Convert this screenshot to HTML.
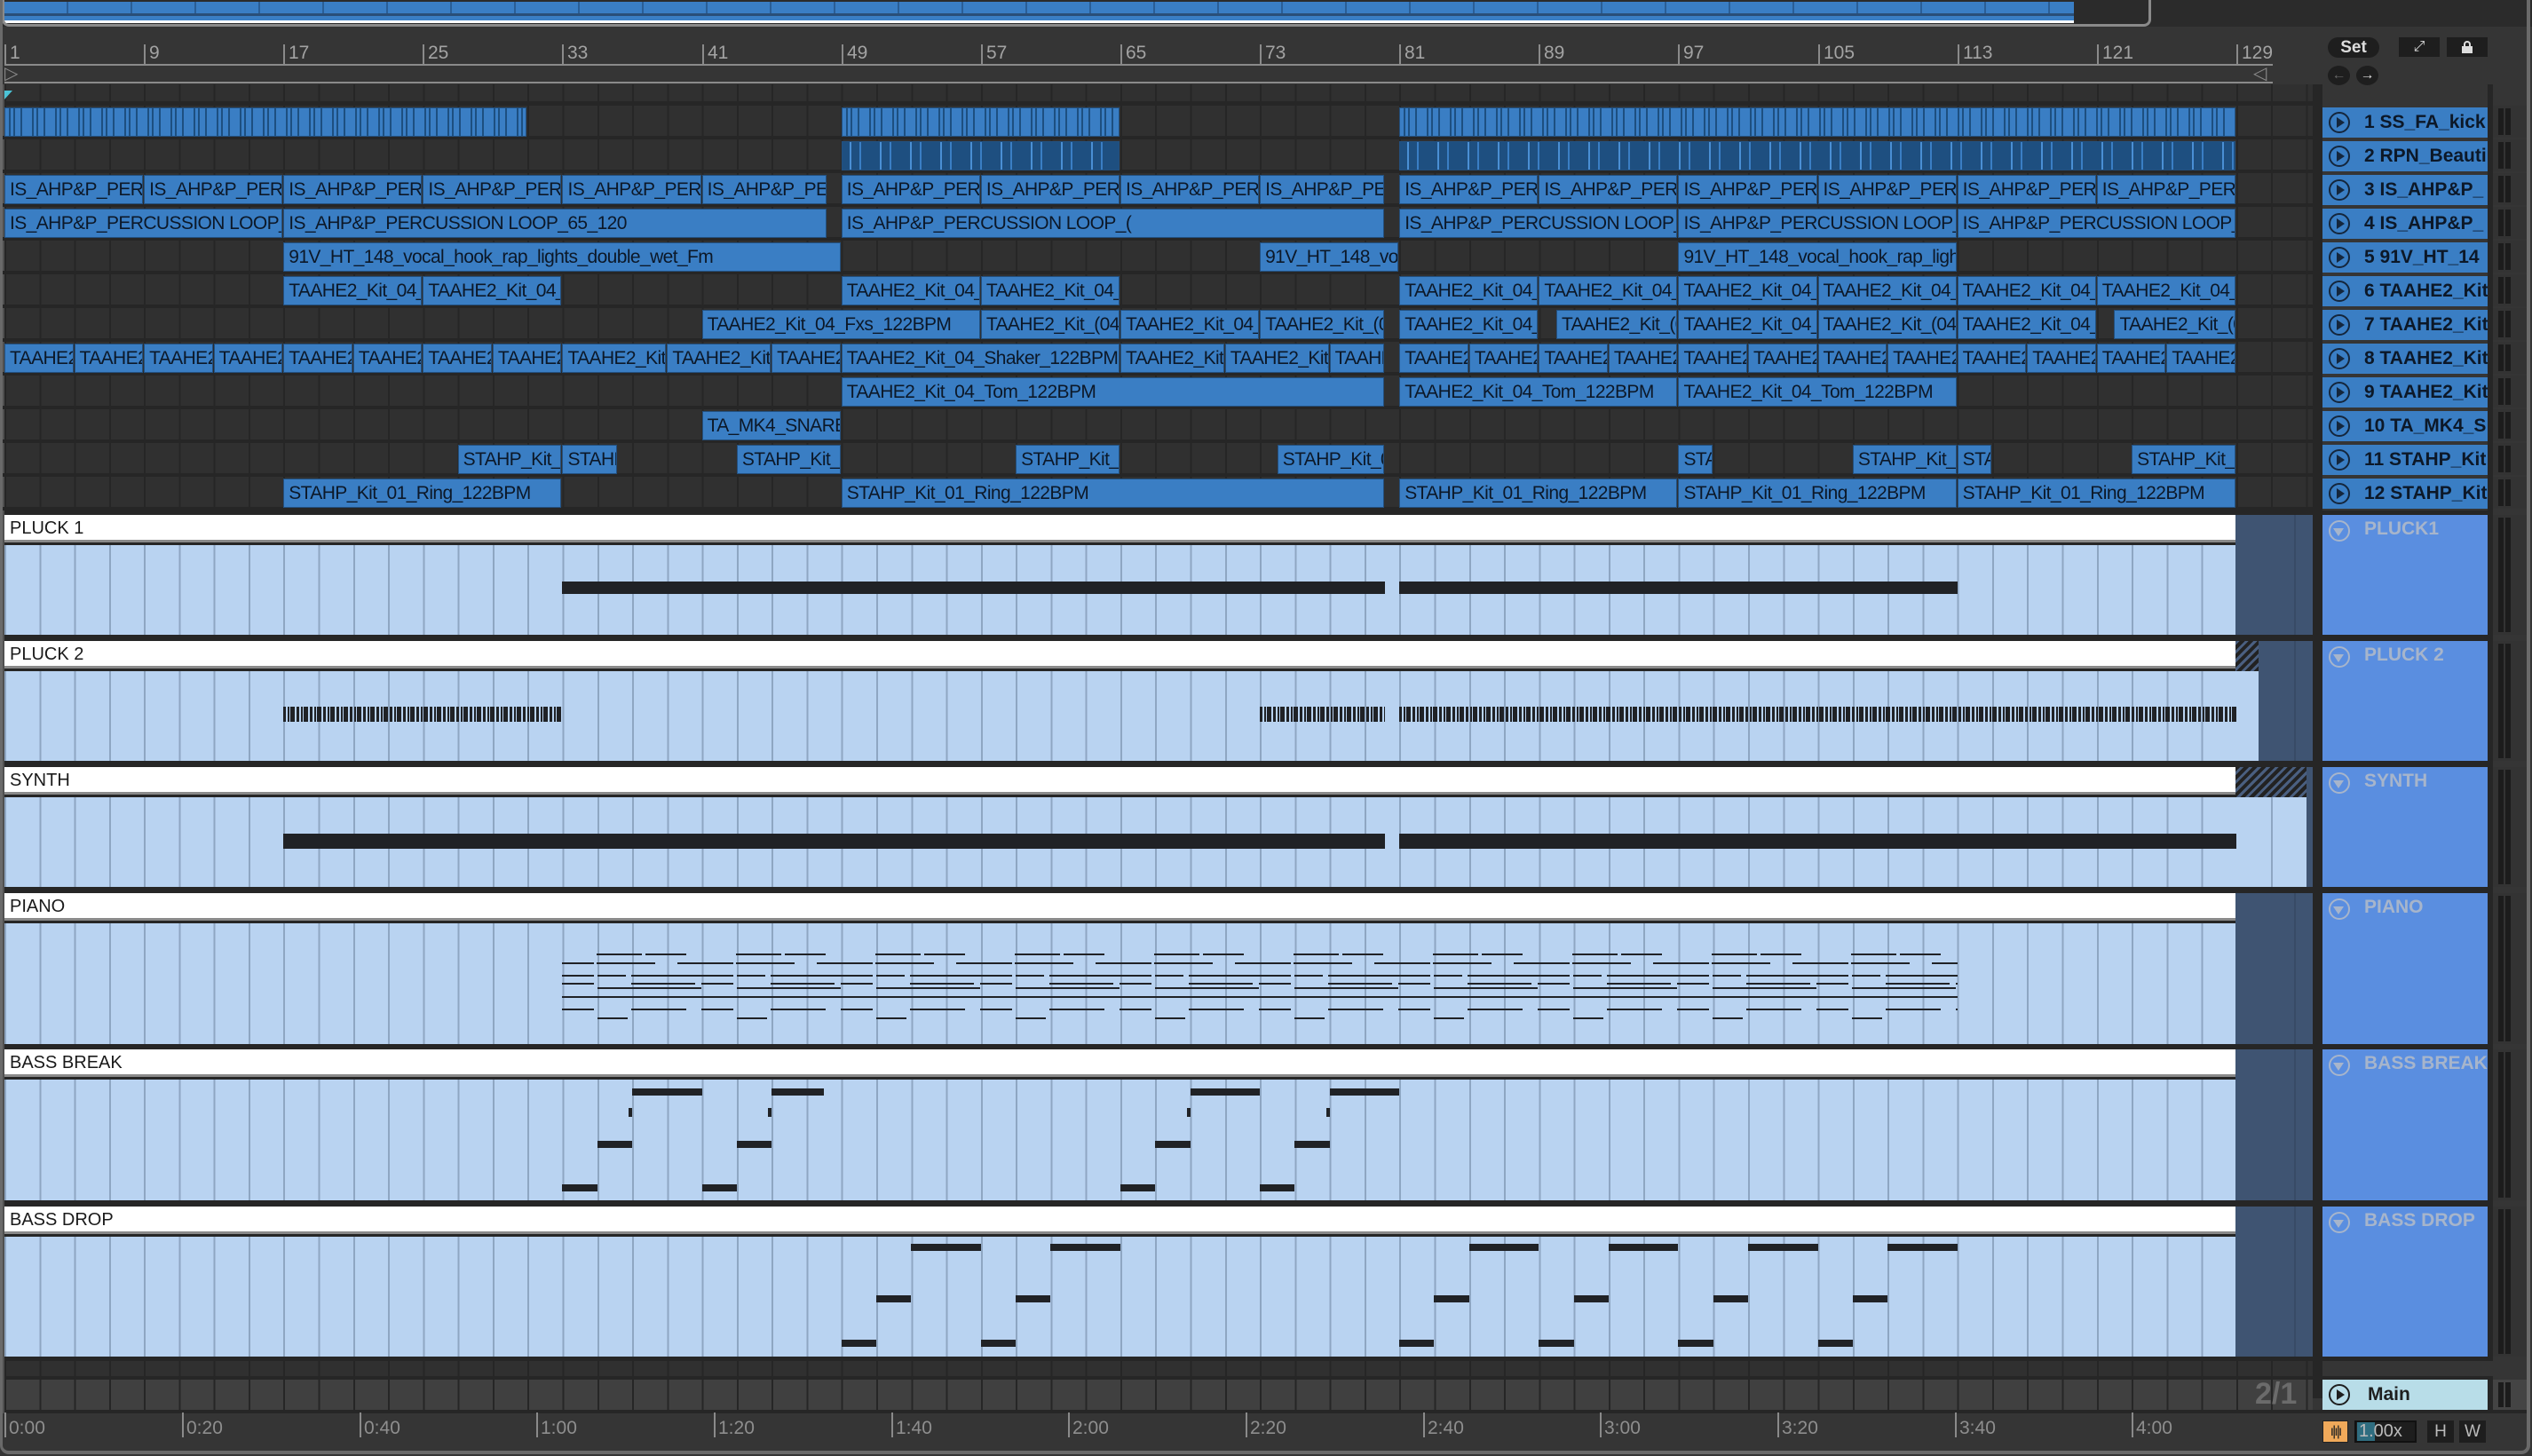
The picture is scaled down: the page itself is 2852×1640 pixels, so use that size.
<!DOCTYPE html>
<html><head><meta charset="utf-8">
<style>
*{margin:0;padding:0;box-sizing:border-box}
body{width:2852px;height:1640px;background:#353535;position:relative;overflow:hidden;font-family:"Liberation Sans Narrow","Liberation Sans",sans-serif}
.a{position:absolute}
.grid{position:absolute;left:5px;width:2600px;background-color:#303030;background-image:repeating-linear-gradient(90deg,#262626 0 2px,transparent 2px 39.28px)}
.row{position:absolute;left:0;width:2605px;height:38px;border-bottom:4px solid #262626}
.c{position:absolute;top:2px;height:33px;left:calc(5px + (var(--b) - 1) * 19.64px);width:calc((var(--e) - var(--b)) * 19.64px - 1px);background:#3a7ec4;border:1px solid #23507f;color:#0c1828;font-size:21px;line-height:31px;padding-left:5px;white-space:nowrap;overflow:hidden;letter-spacing:-0.6px}
.kick{background:repeating-linear-gradient(90deg,#3a7ec4 0 4px,#1d4f80 4px 6px,#3a7ec4 6px 9px,#1d4f80 9px 11px,#3a7ec4 11px 17px,#1d4f80 17px 19px,#3a7ec4 19px 26px)}
.rpn{background:repeating-linear-gradient(90deg,#1e4f80 0 8px,#4a8fd4 8px 10px,#1e4f80 10px 19px,#3a7ec4 19px 21px,#1e4f80 21px 34px)}
.mh{position:absolute;left:5px;width:2513px;height:31px;background:#fff;border-bottom:3px solid #8a8a8a;font-size:20px;line-height:31px;padding-left:6px;color:#1a1a1a;font-family:"Liberation Sans",sans-serif}
.mb{position:absolute;left:5px;width:2513px;background-color:#b9d3f1;background-image:repeating-linear-gradient(90deg,#8ea6c2 0 2px,transparent 2px 39.28px)}
.mx{position:absolute;left:2518px;width:87px;background:#3f5472;background-image:linear-gradient(90deg,transparent 0 66px,#384b66 66px 68px,transparent 68px)}
.n{position:absolute;height:8px;background:#202226;left:calc(5px + (var(--b) - 1) * 19.64px);width:calc((var(--e) - var(--b)) * 19.64px)}
.bc{background:repeating-linear-gradient(90deg,#202226 0 3px,transparent 3px 5px,#202226 5px 7px,transparent 7px 8px,#202226 8px 13px,transparent 13px 15px)}
.pl{position:absolute;height:2px;left:633px;width:1572px}
.th{position:absolute;left:2616px;width:186px;height:34px;background:#3a7ec4;color:#0c1828;font-family:"Liberation Sans",sans-serif;font-weight:bold;font-size:21px;line-height:34px;padding-left:47px;white-space:nowrap;overflow:hidden}
.th:before{content:"";position:absolute;left:7px;top:5px;width:20px;height:20px;border:2.5px solid #14263c;border-radius:50%}
.th:after{content:"";position:absolute;left:16px;top:11px;border-left:9px solid #14263c;border-top:6px solid transparent;border-bottom:6px solid transparent}
.mth{position:absolute;left:2616px;width:186px;background:#5a8ee0;color:#a7b5cb;font-family:"Liberation Sans",sans-serif;font-weight:bold;font-size:21px;padding-left:47px;padding-top:4px;white-space:nowrap;overflow:hidden}
.mth:before{content:"";position:absolute;left:7px;top:6px;width:20px;height:20px;border:2.5px solid #a7b5cb;border-radius:50%}
.mth:after{content:"";position:absolute;left:12px;top:15px;border-top:9px solid #a7b5cb;border-left:6px solid transparent;border-right:6px solid transparent}
.met{position:absolute;left:2808px;width:40px;background:#333}
.met:before,.met:after{content:"";position:absolute;top:3px;bottom:3px;width:6px;background:#1c1c1c}
.met:before{left:6px}.met:after{left:14px}
.rl{position:absolute;top:50px;font-size:21px;color:#a3a3a3;border-left:2px solid #8a8a8a;padding-left:4px;height:22px;line-height:20px}
.tl{position:absolute;top:1591px;font-size:21px;color:#8e8e8e;border-left:2px solid #8a8a8a;padding-left:3px;height:28px;line-height:36px}
</style></head><body>

<div class="a" style="left:0;top:0;width:2852px;height:30px;background:#2b2b2b"></div>
<div class="a" style="left:5px;top:2px;width:2331px;height:14px;background:repeating-linear-gradient(90deg,#3a7ec4 0 70px,#2a5e96 70px 72px)"></div>
<div class="a" style="left:5px;top:15px;width:2331px;height:8px;background:linear-gradient(#2a4f78 0 3px,#3a7ec4 3px)"></div>
<div class="a" style="left:5px;top:23px;width:2331px;height:3px;background:#fff"></div>
<div class="a" style="left:2px;top:0;width:2421px;height:30px;border:3px solid #8a8a8a;border-top:none;border-radius:0 0 8px 8px"></div>

<div class="a" style="left:5px;top:72px;width:2555px;height:2px;background:#8a8a8a"></div>
<div class="a" style="left:5px;top:92px;width:2555px;height:2px;background:#8a8a8a"></div>
<div class="a" style="left:5px;top:74px;color:#8a8a8a;font-size:20px;line-height:18px">▷</div>
<div class="a" style="left:2538px;top:74px;color:#8a8a8a;font-size:20px;line-height:18px">◁</div>
<div class="rl" style="left:5px">1</div>
<div class="rl" style="left:162px">9</div>
<div class="rl" style="left:319px">17</div>
<div class="rl" style="left:476px">25</div>
<div class="rl" style="left:633px">33</div>
<div class="rl" style="left:791px">41</div>
<div class="rl" style="left:948px">49</div>
<div class="rl" style="left:1105px">57</div>
<div class="rl" style="left:1262px">65</div>
<div class="rl" style="left:1419px">73</div>
<div class="rl" style="left:1576px">81</div>
<div class="rl" style="left:1733px">89</div>
<div class="rl" style="left:1890px">97</div>
<div class="rl" style="left:2048px">105</div>
<div class="rl" style="left:2205px">113</div>
<div class="rl" style="left:2362px">121</div>
<div class="rl" style="left:2519px">129</div>

<div class="a" style="left:2622px;top:42px;width:58px;height:23px;background:#1e1e1e;border-radius:12px;color:#ddd;font-family:'Liberation Sans',sans-serif;font-size:19px;font-weight:bold;text-align:center;line-height:23px">Set</div>
<div class="a" style="left:2702px;top:42px;width:46px;height:22px;background:#1e1e1e;color:#ddd;text-align:center;font-size:16px;line-height:22px">⤢</div>
<div class="a" style="left:2756px;top:42px;width:46px;height:22px;background:#1e1e1e"></div>
<div class="a" style="left:2773px;top:52px;width:12px;height:8px;background:#ddd"></div>
<div class="a" style="left:2775px;top:46px;width:8px;height:8px;border:2px solid #ddd;border-bottom:none;border-radius:4px 4px 0 0"></div>
<div class="a" style="left:2622px;top:74px;width:25px;height:22px;background:#1e1e1e;border-radius:50%;color:#666;text-align:center;font-size:16px;line-height:22px">←</div>
<div class="a" style="left:2654px;top:74px;width:25px;height:22px;background:#1e1e1e;border-radius:50%;color:#ddd;text-align:center;font-size:16px;line-height:22px">→</div>

<div class="grid" style="top:95px;height:482px"></div>
<div class="a" style="left:5px;top:114px;width:2600px;height:5px;background:#262626"></div>
<div class="a" style="left:2605px;top:95px;width:11px;height:1440px;background:#262626"></div>
<div class="a" style="left:0;top:95px;width:5px;height:1500px;background:#505050"></div>

<div class="row" style="top:119px">
<div class="c kick" style="--b:1;--e:31"></div><div class="c kick" style="--b:49;--e:65"></div><div class="c kick" style="--b:81;--e:129"></div>
</div>
<div class="row" style="top:157px">
<div class="c rpn" style="--b:49;--e:65"></div><div class="c rpn" style="--b:81;--e:129"></div>
</div>
<div class="row" style="top:195px">
<div class="c" style="--b:1;--e:9">IS_AHP&amp;P_PERCUSSION</div><div class="c" style="--b:9;--e:17">IS_AHP&amp;P_PERCUSSION</div><div class="c" style="--b:17;--e:25">IS_AHP&amp;P_PERCUSSION</div><div class="c" style="--b:25;--e:33">IS_AHP&amp;P_PERCUSSION</div><div class="c" style="--b:33;--e:41">IS_AHP&amp;P_PERCUSSION</div><div class="c" style="--b:41;--e:48.2">IS_AHP&amp;P_PERCUSSION</div>
<div class="c" style="--b:49;--e:57">IS_AHP&amp;P_PERCUSSION</div><div class="c" style="--b:57;--e:65">IS_AHP&amp;P_PERCUSSION</div><div class="c" style="--b:65;--e:73">IS_AHP&amp;P_PERCUSSION</div><div class="c" style="--b:73;--e:80.2">IS_AHP&amp;P_PERCUSSION</div>
<div class="c" style="--b:81;--e:89">IS_AHP&amp;P_PERCUSSION</div><div class="c" style="--b:89;--e:97">IS_AHP&amp;P_PERCUSSION</div><div class="c" style="--b:97;--e:105">IS_AHP&amp;P_PERCUSSION</div><div class="c" style="--b:105;--e:113">IS_AHP&amp;P_PERCUSSION</div><div class="c" style="--b:113;--e:121">IS_AHP&amp;P_PERCUSSION</div><div class="c" style="--b:121;--e:129">IS_AHP&amp;P_PERCUSSION</div>
</div>
<div class="row" style="top:233px">
<div class="c" style="--b:1;--e:17">IS_AHP&amp;P_PERCUSSION LOOP_65_120</div><div class="c" style="--b:17;--e:48.2">IS_AHP&amp;P_PERCUSSION LOOP_65_120</div>
<div class="c" style="--b:49;--e:80.2">IS_AHP&amp;P_PERCUSSION LOOP_(</div>
<div class="c" style="--b:81;--e:97">IS_AHP&amp;P_PERCUSSION LOOP_65_120</div><div class="c" style="--b:97;--e:113">IS_AHP&amp;P_PERCUSSION LOOP_65_120</div><div class="c" style="--b:113;--e:129">IS_AHP&amp;P_PERCUSSION LOOP_65_120</div>
</div>
<div class="row" style="top:271px">
<div class="c" style="--b:17;--e:49">91V_HT_148_vocal_hook_rap_lights_double_wet_Fm</div><div class="c" style="--b:73;--e:81">91V_HT_148_vocal</div><div class="c" style="--b:97;--e:113">91V_HT_148_vocal_hook_rap_lights</div>
</div>
<div class="row" style="top:309px">
<div class="c" style="--b:17;--e:25">TAAHE2_Kit_04_</div><div class="c" style="--b:25;--e:33">TAAHE2_Kit_04_</div><div class="c" style="--b:49;--e:57">TAAHE2_Kit_04_</div><div class="c" style="--b:57;--e:65">TAAHE2_Kit_04_</div>
<div class="c" style="--b:81;--e:89">TAAHE2_Kit_04_</div><div class="c" style="--b:89;--e:97">TAAHE2_Kit_04_</div><div class="c" style="--b:97;--e:105">TAAHE2_Kit_04_</div><div class="c" style="--b:105;--e:113">TAAHE2_Kit_04_</div><div class="c" style="--b:113;--e:121">TAAHE2_Kit_04_</div><div class="c" style="--b:121;--e:129">TAAHE2_Kit_04_</div>
</div>
<div class="row" style="top:347px">
<div class="c" style="--b:41;--e:57">TAAHE2_Kit_04_Fxs_122BPM</div><div class="c" style="--b:57;--e:65">TAAHE2_Kit_(04</div><div class="c" style="--b:65;--e:73">TAAHE2_Kit_04_</div><div class="c" style="--b:73;--e:80.2">TAAHE2_Kit_(04</div>
<div class="c" style="--b:81;--e:89">TAAHE2_Kit_04_</div><div class="c" style="--b:90;--e:97">TAAHE2_Kit_(04</div><div class="c" style="--b:97;--e:105">TAAHE2_Kit_04_</div><div class="c" style="--b:105;--e:113">TAAHE2_Kit_(04</div><div class="c" style="--b:113;--e:121">TAAHE2_Kit_04_</div><div class="c" style="--b:122;--e:129">TAAHE2_Kit_(04</div>
</div>
<div class="row" style="top:385px">
<div class="c" style="--b:1;--e:5">TAAHE2_</div><div class="c" style="--b:5;--e:9">TAAHE2_</div><div class="c" style="--b:9;--e:13">TAAHE2_</div><div class="c" style="--b:13;--e:17">TAAHE2_</div><div class="c" style="--b:17;--e:21">TAAHE2_</div><div class="c" style="--b:21;--e:25">TAAHE2_</div><div class="c" style="--b:25;--e:29">TAAHE2_</div><div class="c" style="--b:29;--e:33">TAAHE2_</div><div class="c" style="--b:33;--e:39">TAAHE2_Kit_</div><div class="c" style="--b:39;--e:45">TAAHE2_Kit_</div><div class="c" style="--b:45;--e:49">TAAHE2_</div>
<div class="c" style="--b:49;--e:65">TAAHE2_Kit_04_Shaker_122BPM</div><div class="c" style="--b:65;--e:71">TAAHE2_Kit_</div><div class="c" style="--b:71;--e:77">TAAHE2_Kit_</div><div class="c" style="--b:77;--e:80.2">TAAHE2</div>
<div class="c" style="--b:81;--e:85">TAAHE2_</div><div class="c" style="--b:85;--e:89">TAAHE2_</div><div class="c" style="--b:89;--e:93">TAAHE2_</div><div class="c" style="--b:93;--e:97">TAAHE2_</div><div class="c" style="--b:97;--e:101">TAAHE2_</div><div class="c" style="--b:101;--e:105">TAAHE2_</div><div class="c" style="--b:105;--e:109">TAAHE2_</div><div class="c" style="--b:109;--e:113">TAAHE2_</div><div class="c" style="--b:113;--e:117">TAAHE2_</div><div class="c" style="--b:117;--e:121">TAAHE2_</div><div class="c" style="--b:121;--e:125">TAAHE2_</div><div class="c" style="--b:125;--e:129">TAAHE2_</div>
</div>
<div class="row" style="top:423px">
<div class="c" style="--b:49;--e:80.2">TAAHE2_Kit_04_Tom_122BPM</div><div class="c" style="--b:81;--e:97">TAAHE2_Kit_04_Tom_122BPM</div><div class="c" style="--b:97;--e:113">TAAHE2_Kit_04_Tom_122BPM</div>
</div>
<div class="row" style="top:461px">
<div class="c" style="--b:41;--e:49">TA_MK4_SNARE</div>
</div>
<div class="row" style="top:499px">
<div class="c" style="--b:27;--e:33">STAHP_Kit_01</div><div class="c" style="--b:33;--e:36.2">STAHP</div><div class="c" style="--b:43;--e:49">STAHP_Kit_01</div><div class="c" style="--b:59;--e:65">STAHP_Kit_01</div><div class="c" style="--b:74;--e:80.2">STAHP_Kit_01</div><div class="c" style="--b:97;--e:99">STA</div><div class="c" style="--b:107;--e:113">STAHP_Kit_01</div><div class="c" style="--b:113;--e:115">STA</div><div class="c" style="--b:123;--e:129">STAHP_Kit_01</div>
</div>
<div class="row" style="top:537px">
<div class="c" style="--b:17;--e:33">STAHP_Kit_01_Ring_122BPM</div><div class="c" style="--b:49;--e:80.2">STAHP_Kit_01_Ring_122BPM</div><div class="c" style="--b:81;--e:97">STAHP_Kit_01_Ring_122BPM</div><div class="c" style="--b:97;--e:113">STAHP_Kit_01_Ring_122BPM</div><div class="c" style="--b:113;--e:129">STAHP_Kit_01_Ring_122BPM</div>
</div>
<div class="a" style="left:5px;top:102px;border-left:9px solid #4cc3d6;border-bottom:10px solid transparent"></div>

<div class="th" style="top:121px">1 SS_FA_kick</div>
<div class="th" style="top:159px">2 RPN_Beauti</div>
<div class="th" style="top:197px">3 IS_AHP&amp;P_</div>
<div class="th" style="top:235px">4 IS_AHP&amp;P_</div>
<div class="th" style="top:273px">5 91V_HT_14</div>
<div class="th" style="top:311px">6 TAAHE2_Kit</div>
<div class="th" style="top:349px">7 TAAHE2_Kit</div>
<div class="th" style="top:387px">8 TAAHE2_Kit</div>
<div class="th" style="top:425px">9 TAAHE2_Kit</div>
<div class="th" style="top:463px">10 TA_MK4_S</div>
<div class="th" style="top:501px">11 STAHP_Kit</div>
<div class="th" style="top:539px">12 STAHP_Kit</div>
<div class="a" style="left:2802px;top:95px;width:6px;height:1500px;background:#262626"></div>
<div class="met" style="top:119px;height:36px"></div><div class="met" style="top:157px;height:36px"></div><div class="met" style="top:195px;height:36px"></div><div class="met" style="top:233px;height:36px"></div><div class="met" style="top:271px;height:36px"></div><div class="met" style="top:309px;height:36px"></div><div class="met" style="top:347px;height:36px"></div><div class="met" style="top:385px;height:36px"></div><div class="met" style="top:423px;height:36px"></div><div class="met" style="top:461px;height:36px"></div><div class="met" style="top:499px;height:36px"></div><div class="met" style="top:537px;height:36px"></div>

<div class="a" style="left:5px;top:575px;width:2797px;height:1000px;background:#262626"></div>

<div class="mh" style="top:580px">PLUCK 1</div>
<div class="mb" style="top:614px;height:101px"></div>
<div class="mx" style="top:580px;height:135px"></div>
<div class="mth" style="top:580px;height:135px">PLUCK1</div>
<div class="met" style="top:580px;height:135px"></div>
<div class="n" style="--b:33;--e:80.2;top:655px;height:14px"></div>
<div class="n" style="--b:81;--e:113;top:655px;height:14px"></div>

<div class="mh" style="top:722px">PLUCK 2</div>
<div class="mb" style="top:756px;height:101px"></div>
<div class="mx" style="top:722px;height:135px"></div>
<div class="a" style="left:2518px;top:722px;width:26px;height:34px;background:repeating-linear-gradient(-45deg,#222 0 4px,#4a5f80 4px 7px)"></div>
<div class="a" style="left:2518px;top:756px;width:26px;height:101px;background:#b9d3f1"></div>
<div class="mth" style="top:722px;height:135px">PLUCK 2</div>
<div class="met" style="top:722px;height:135px"></div>
<div class="n bc" style="--b:17;--e:33;top:796px;height:17px"></div>
<div class="n bc" style="--b:73;--e:80.2;top:796px;height:17px"></div>
<div class="n bc" style="--b:81;--e:129;top:796px;height:17px"></div>

<div class="mh" style="top:864px">SYNTH</div>
<div class="mb" style="top:898px;height:101px"></div>
<div class="mx" style="top:864px;height:135px"></div>
<div class="a" style="left:2518px;top:864px;width:80px;height:34px;background:repeating-linear-gradient(-45deg,#222 0 4px,#4a5f80 4px 7px)"></div>
<div class="a" style="left:2518px;top:898px;width:80px;height:101px;background:#b9d3f1;background-image:linear-gradient(90deg,transparent 0 40px,#8ea6c2 40px 42px,transparent 42px)"></div>
<div class="mth" style="top:864px;height:135px">SYNTH</div>
<div class="met" style="top:864px;height:135px"></div>
<div class="n" style="--b:17;--e:80.2;top:939px;height:17px"></div>
<div class="n" style="--b:81;--e:129;top:939px;height:17px"></div>

<div class="mh" style="top:1006px">PIANO</div>
<div class="mb" style="top:1040px;height:136px"></div>
<div class="mx" style="top:1006px;height:170px"></div>
<div class="mth" style="top:1006px;height:170px">PIANO</div>
<div class="met" style="top:1006px;height:170px"></div>
<div class="pl" style="top:1074px;background:repeating-linear-gradient(90deg,transparent 0 39px,#202226 39px 90px,transparent 90px 94px,#202226 94px 140px,transparent 140px 157px)"></div>
<div class="pl" style="top:1084px;background:repeating-linear-gradient(90deg,#202226 0 36px,transparent 36px 39px,#202226 39px 105px,transparent 105px 130px,#202226 130px 157px)"></div>
<div class="pl" style="top:1098px;background:repeating-linear-gradient(90deg,#202226 0 36px,transparent 36px 40px,#202226 40px 72px,transparent 72px 78px,#202226 78px 157px)"></div>
<div class="pl" style="top:1107px;background:repeating-linear-gradient(90deg,#202226 0 36px,transparent 36px 78px,#202226 78px 150px,transparent 150px 157px)"></div>
<div class="pl" style="top:1112px;background:repeating-linear-gradient(90deg,transparent 0 40px,#202226 40px 157px)"></div>
<div class="pl" style="top:1122px;background:repeating-linear-gradient(90deg,#202226 0 157px)"></div>
<div class="pl" style="top:1136px;background:repeating-linear-gradient(90deg,#202226 0 36px,transparent 36px 78px,#202226 78px 140px,transparent 140px 157px)"></div>
<div class="pl" style="top:1146px;background:repeating-linear-gradient(90deg,transparent 0 40px,#202226 40px 74px,transparent 74px 157px)"></div>

<div class="mh" style="top:1182px">BASS BREAK</div>
<div class="mb" style="top:1216px;height:136px"></div>
<div class="mx" style="top:1182px;height:170px"></div>
<div class="mth" style="top:1182px;height:170px">BASS BREAK</div>
<div class="met" style="top:1182px;height:170px"></div>
<div class="n" style="--b:33;--e:35;top:1334px"></div><div class="n" style="--b:35;--e:37;top:1285px"></div><div class="n" style="--b:36.8;--e:37;top:1248px;height:10px"></div><div class="n" style="--b:37;--e:41;top:1226px"></div>
<div class="n" style="--b:41;--e:43;top:1334px"></div><div class="n" style="--b:43;--e:45;top:1285px"></div><div class="n" style="--b:44.8;--e:45;top:1248px;height:10px"></div><div class="n" style="--b:45;--e:48;top:1226px"></div>
<div class="n" style="--b:65;--e:67;top:1334px"></div><div class="n" style="--b:67;--e:69;top:1285px"></div><div class="n" style="--b:68.8;--e:69;top:1248px;height:10px"></div><div class="n" style="--b:69;--e:73;top:1226px"></div>
<div class="n" style="--b:73;--e:75;top:1334px"></div><div class="n" style="--b:75;--e:77;top:1285px"></div><div class="n" style="--b:76.8;--e:77;top:1248px;height:10px"></div><div class="n" style="--b:77;--e:81;top:1226px"></div>

<div class="mh" style="top:1359px">BASS DROP</div>
<div class="mb" style="top:1393px;height:135px"></div>
<div class="mx" style="top:1359px;height:169px"></div>
<div class="mth" style="top:1359px;height:169px">BASS DROP</div>
<div class="met" style="top:1359px;height:169px"></div>
<div class="n" style="--b:49;--e:51;top:1509px"></div><div class="n" style="--b:51;--e:53;top:1459px"></div><div class="n" style="--b:53;--e:57;top:1401px"></div>
<div class="n" style="--b:57;--e:59;top:1509px"></div><div class="n" style="--b:59;--e:61;top:1459px"></div><div class="n" style="--b:61;--e:65;top:1401px"></div>
<div class="n" style="--b:81;--e:83;top:1509px"></div><div class="n" style="--b:83;--e:85;top:1459px"></div><div class="n" style="--b:85;--e:89;top:1401px"></div>
<div class="n" style="--b:89;--e:91;top:1509px"></div><div class="n" style="--b:91;--e:93;top:1459px"></div><div class="n" style="--b:93;--e:97;top:1401px"></div>
<div class="n" style="--b:97;--e:99;top:1509px"></div><div class="n" style="--b:99;--e:101;top:1459px"></div><div class="n" style="--b:101;--e:105;top:1401px"></div>
<div class="n" style="--b:105;--e:107;top:1509px"></div><div class="n" style="--b:107;--e:109;top:1459px"></div><div class="n" style="--b:109;--e:113;top:1401px"></div>

<div class="grid" style="top:1533px;height:17px"></div>
<div class="a" style="left:2616px;top:1533px;width:232px;height:17px;background:#353535"></div>
<div class="grid" style="top:1554px;height:34px;background-color:#404040;width:2600px"></div>
<div class="a" style="left:2540px;top:1550px;font-family:'Liberation Sans',sans-serif;font-weight:bold;font-size:34px;color:#6b6b6b;line-height:40px">2/1</div>
<div class="a" style="left:2616px;top:1554px;width:186px;height:34px;background:#b8dde8;color:#1e1e1e;font-family:'Liberation Sans',sans-serif;font-size:21px;font-weight:bold;line-height:34px;padding-left:51px">Main</div>
<div class="a" style="left:2623px;top:1559px;width:24px;height:24px;border:2.5px solid #1e1e1e;border-radius:50%"></div>
<div class="a" style="left:2632px;top:1565px;border-left:9px solid #1e1e1e;border-top:6px solid transparent;border-bottom:6px solid transparent"></div>
<div class="met" style="top:1554px;height:34px;background:#444"></div>
<div class="a" style="left:5px;top:1588px;width:2843px;height:4px;background:#262626"></div>

<div class="a" style="left:0;top:1592px;width:2848px;height:44px;background:#353535"></div>
<div class="tl" style="left:5px">0:00</div>
<div class="tl" style="left:205px">0:20</div>
<div class="tl" style="left:405px">0:40</div>
<div class="tl" style="left:604px">1:00</div>
<div class="tl" style="left:804px">1:20</div>
<div class="tl" style="left:1004px">1:40</div>
<div class="tl" style="left:1203px">2:00</div>
<div class="tl" style="left:1403px">2:20</div>
<div class="tl" style="left:1603px">2:40</div>
<div class="tl" style="left:1802px">3:00</div>
<div class="tl" style="left:2002px">3:20</div>
<div class="tl" style="left:2202px">3:40</div>
<div class="tl" style="left:2401px">4:00</div>
<div class="a" style="left:2616px;top:1600px;width:29px;height:25px;background:#f0a95a;border:1px solid #222;color:#222;font-size:16px;text-align:center;line-height:23px;letter-spacing:-2px">ı|ı|ı</div>
<div class="a" style="left:2652px;top:1600px;width:70px;height:25px;background:#1e1e1e;border:2px solid #111"></div>
<div class="a" style="left:2655px;top:1602px;width:20px;height:21px;background:#2f6d80"></div>
<div class="a" style="left:2657px;top:1600px;color:#bbb;font-family:'Liberation Sans',sans-serif;font-size:20px;line-height:25px">1.00x</div>
<div class="a" style="left:2734px;top:1600px;width:30px;height:25px;background:#1e1e1e;color:#bbb;font-family:'Liberation Sans',sans-serif;font-size:19px;text-align:center;line-height:25px">H</div>
<div class="a" style="left:2770px;top:1600px;width:30px;height:25px;background:#1e1e1e;color:#bbb;font-family:'Liberation Sans',sans-serif;font-size:19px;text-align:center;line-height:25px">W</div>

<div class="a" style="left:0;top:0;width:2850px;height:1638px;border-right:4px solid #6a6a6a;border-bottom:4px solid #6a6a6a;border-left:3px solid #6a6a6a;border-radius:0 0 10px 10px;pointer-events:none"></div>
</body></html>
